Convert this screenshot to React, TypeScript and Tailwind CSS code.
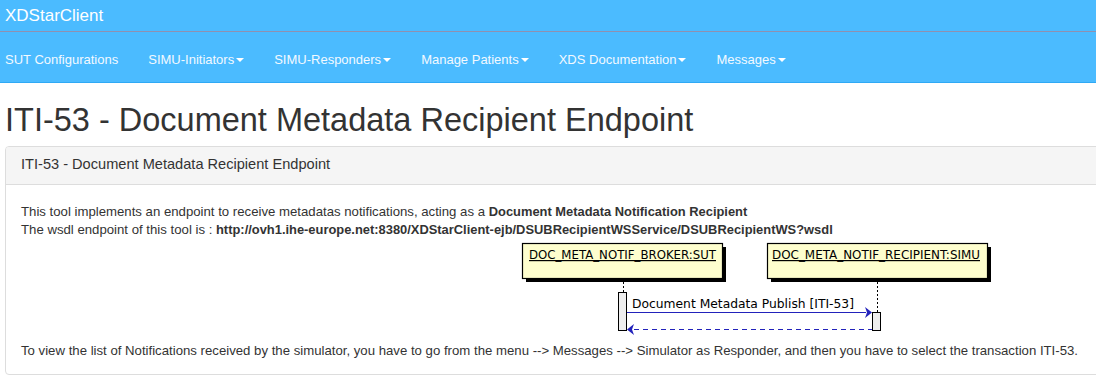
import React from "react";

const Caret = () => (
  <span className="inline-block ml-[2px] align-middle w-0 h-0 border-t-[4px] border-t-white border-x-[4px] border-x-transparent" />
);

const navItems: { label: string; caret: boolean }[] = [
  { label: "SUT Configurations", caret: false },
  { label: "SIMU-Initiators", caret: true },
  { label: "SIMU-Responders", caret: true },
  { label: "Manage Patients", caret: true },
  { label: "XDS Documentation", caret: true },
  { label: "Messages", caret: true },
];

function Diagram() {
  const font = "'DejaVu Sans', sans-serif";
  return (
    <svg width="500" height="103" viewBox="0 0 500 103" className="block ml-[495px]">
      {/* Participant 1 */}
      <rect x="10" y="8" width="200" height="35" fill="#000" />
      <rect x="6.5" y="4.5" width="200" height="35" fill="#FEFECE" stroke="#000" strokeWidth="1.2" />
      <text x="13" y="20" fontFamily={font} fontSize="12" textLength="187" lengthAdjust="spacingAndGlyphs" fill="#000" textDecoration="underline">
        DOC_META_NOTIF_BROKER:SUT
      </text>
      {/* Participant 2 */}
      <rect x="255" y="8" width="220" height="35" fill="#000" />
      <rect x="251.5" y="4.5" width="220" height="35" fill="#FEFECE" stroke="#000" strokeWidth="1.2" />
      <text x="256" y="20" fontFamily={font} fontSize="12" textLength="208" lengthAdjust="spacingAndGlyphs" fill="#000" textDecoration="underline">
        DOC_META_NOTIF_RECIPIENT:SIMU
      </text>
      {/* Lifelines */}
      <line x1="107.5" y1="43" x2="107.5" y2="53" stroke="#000" strokeWidth="1" strokeDasharray="2,2" />
      <line x1="361.5" y1="43" x2="361.5" y2="73" stroke="#000" strokeWidth="1" strokeDasharray="2,2" />
      {/* Activations */}
      <rect x="102.5" y="53.5" width="8" height="38" fill="#EEEEEE" stroke="#000" strokeWidth="1" />
      <rect x="356.5" y="73.5" width="8" height="18" fill="#EEEEEE" stroke="#000" strokeWidth="1" />
      {/* Message */}
      <text x="116" y="69" fontFamily={font} fontSize="12" textLength="222" lengthAdjust="spacingAndGlyphs" fill="#000">
        Document Metadata Publish [ITI-53]
      </text>
      <line x1="111" y1="73.5" x2="350" y2="73.5" stroke="#2222BB" strokeWidth="1" />
      <polygon points="349,68 356,73.5 349,79 351,73.5" fill="#2222BB" />
      {/* Return */}
      <line x1="118" y1="90.5" x2="356" y2="90.5" stroke="#2222BB" strokeWidth="1" strokeDasharray="5,4" />
      <polygon points="118,85 111,90.5 118,96 116,90.5" fill="#2222BB" />
    </svg>
  );
}

export default function App() {
  return (
    <div className="w-[1096px] h-[382px] overflow-hidden bg-white text-[#333] font-['Liberation_Sans',Arial,sans-serif]">
      {/* Navbar */}
      <div className="bg-[#4bbbff] border-b border-b-[#2fa9f5]">
        <div className="h-[32px] flex items-center pl-[5px] border-b border-b-[#9090b0]">
          <span className="text-white text-[17px] leading-none">XDStarClient</span>
        </div>
        <div className="h-[50px] flex items-center pl-[5px] pt-[5px] gap-[30px]">
          {navItems.map((it) => (
            <span key={it.label} className="text-[13px] text-[#f2f9ff] whitespace-nowrap">
              {it.label}
              {it.caret && <Caret />}
            </span>
          ))}
        </div>
      </div>

      {/* Content */}
      <div className="pl-[5px]">
        <h1 className="text-[32.5px] leading-[1.1] mt-[20px] mb-[7px] font-normal text-[#333] whitespace-nowrap">
          ITI-53 - Document Metadata Recipient Endpoint
        </h1>
        <div className="w-[1120px] border border-[#dddddd] rounded-[4px] bg-white">
          <div className="bg-[#f5f5f5] border-b border-[#dddddd] rounded-t-[3px] px-[15px] h-[38px] flex items-center">
            <span className="text-[14.6px] text-[#333]">ITI-53 - Document Metadata Recipient Endpoint</span>
          </div>
          <div className="px-[15px] pt-[18px] pb-[14px] text-[13.2px] leading-[18px] text-[#333]">
            <div className="whitespace-nowrap">
              This tool implements an endpoint to receive metadatas notifications, acting as a{" "}
              <b className="text-[12.9px]">Document Metadata Notification Recipient</b>
            </div>
            <div className="whitespace-nowrap">
              The wsdl endpoint of this tool is :{" "}
              <b className="text-[12.9px]">http://ovh1.ihe-europe.net:8380/XDStarClient-ejb/DSUBRecipientWSService/DSUBRecipientWS?wsdl</b>
            </div>
            <Diagram />
            <div className="whitespace-nowrap">
              To view the list of Notifications received by the simulator, you have to go from the menu --&gt; Messages --&gt; Simulator as Responder, and then you have to select the transaction ITI-53.
            </div>
          </div>
        </div>
      </div>
    </div>
  );
}
